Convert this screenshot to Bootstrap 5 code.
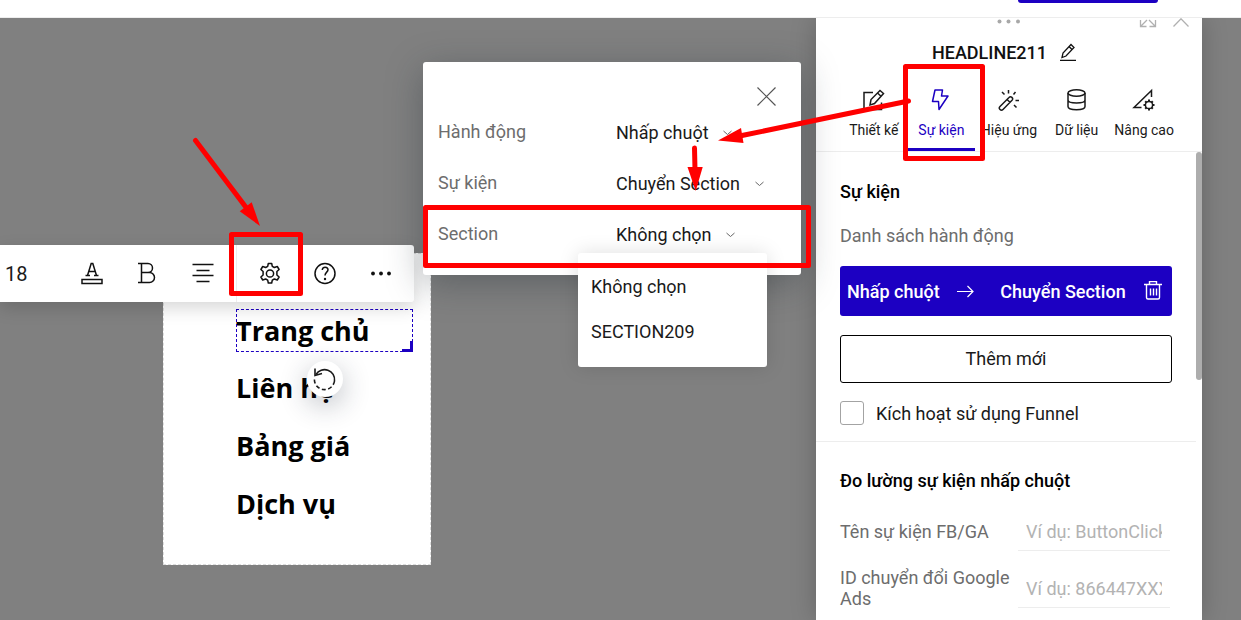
<!DOCTYPE html>
<html lang="vi">
<head>
<meta charset="utf-8">
<meta name="viewport" content="width=device-width, initial-scale=1">
<title>Trình chỉnh sửa trang</title>
<link rel="stylesheet" href="https://cdn.jsdelivr.net/npm/bootstrap@5.3.0/dist/css/bootstrap.min.css">
<style>
  :root { --brand: #1c00c2; --mute: #6d6d6d; --line: #ededed; }
  body { font-family: Roboto, "Liberation Sans", sans-serif; font-size: 18px; line-height: 21px; color: #1a1a1a; background: #808080; }
  svg { display: block; fill: none; stroke: currentColor; }
  button { font-family: inherit; }
  .tool-reset { background: none; border: 0; padding: 0; color: inherit; }
  .topbar { height: 18px; border-bottom: 1px solid var(--line); padding-right: 83px; }
  .btn-publish { width: 140px; height: 3px; background: var(--brand); border-radius: 0 0 3px 3px; }

  /* page section on the canvas */
  .page-block { left: 163px; top: 235px; width: 268px; height: 312px; padding: 55px 17px 0 72px; border: 1px dashed #ddd; }
  .menu-text { font: 700 27px/43px "Open Sans", sans-serif; color: #000; height: 43px; white-space: nowrap; }
  .menu-text.picked { outline: 1px dashed var(--brand); outline-offset: -1px; }
  .menu-text.picked::after { content: ""; position: absolute; right: 0; bottom: 0; width: 11px; height: 11px; border: solid var(--brand); border-width: 0 3px 3px 0; }
  .menu-stack { gap: 15px; }
  .menu-stack .picked { margin-bottom: -1px; }
  .btn-rotate { left: 307px; top: 343px; width: 36px; height: 36px; box-shadow: 0 8px 28px rgba(30,40,60,.3); }

  .format-bar { left: 0; top: 227px; height: 57px; padding-right: 4px; border-radius: 0 3px 3px 0; box-shadow: 0 6px 18px rgba(0,0,0,.16); color: #111; }
  .format-bar button { width: 56px; height: 57px; }
  .size-input { width: 64px; border: 0; padding: 2px 0 0 5px; font-size: 20px; color: #1a1a1a; background: none; }
  .bar-rule { margin-left: 4px; border-left: 1px solid var(--line); padding-left: 5px; }

  .action-box { left: 423px; top: 44px; width: 378px; height: 213px; padding: 24px 15px 0; border-radius: 3px; box-shadow: 0 8px 36px rgba(30,40,50,.35); z-index: 3; }
  .action-box label, .field label, .mute-text { color: var(--mute); }
  .btn-shut { width: 20px; height: 20px; margin-right: 9px; color: #555; }
  .action-row { height: 51px; }
  .action-row label { width: 178px; }
  .action-row svg { margin: 2px 0 0 14px; }
  .pick { appearance: none; border: 0; background: none; padding: 2px 0 0; color: #1a1a1a; line-height: 24px; }
  .pick-narrow { width: 96px; }
  .option-menu { left: 155px; top: 191px; width: 189px; height: 114px; padding: 11px 13px; border-radius: 3px; box-shadow: 0 0 20px rgba(0,0,0,.13); }
  .option-menu button { height: 45px; text-align: left; }

  .side-panel { width: 386px; margin-right: 39px; box-shadow: 0 0 24px rgba(0,0,0,.22); z-index: 2; }
  .grip { height: 10px; color: #b0b0b0; }
  .grip-dots { left: 50%; top: 1px; margin-left: -12px; }
  .grip-tools { right: 12px; top: 0; gap: 15px; }
  .panel-title { height: 48px; gap: 13px; color: #111; font-weight: 500; padding-right: 10px; margin-bottom: 2px; }
  .tab-strip { padding: 0 24px; border-bottom: 1px solid var(--line); height: 74px; }
  .tab-strip button { flex: 1 1 0; height: 73px; padding-top: 10px; font-size: 14px; line-height: 20px; gap: 8px; border-bottom: 3px solid transparent; white-space: nowrap; }
  .tab-strip button.active { color: var(--brand); border-bottom-color: var(--brand); }
  .group { margin-right: 6px; padding: 28px 24px 0; }
  .group h2 { font-size: 18px; line-height: 22px; font-weight: 500; color: #000; margin: 0; }
  .first-group { height: 290px; padding-top: 29px; border-bottom: 1px solid var(--line); }
  .mute-text { margin: 22px 0 20px; }
  .event-card { height: 50px; background: var(--brand); color: #fff; border-radius: 3px; padding: 0 9px 0 7px; font-weight: 500; }
  .btn-more { height: 48px; margin-top: 19px; padding-bottom: 2px; border: 1px solid #000; border-radius: 3px; }
  .funnel { margin-top: 18px; gap: 12px; }
  .funnel input { appearance: none; width: 24px; height: 24px; border: 1px solid #a3a3a3; border-radius: 3px; margin: 0; }
  .field { margin-top: 17px; }
  h2 + .field { margin-top: 21px; }
  .field label { width: 178px; padding-bottom: 2px; }
  .field input { width: 152px; height: 38px; padding: 0 8px; border: 0; border-bottom: 1px solid var(--line); background: none; }
  .field input::placeholder { color: #b3b3b3; opacity: 1; }
  .field + .field { margin-top: 16px; }
  .thumb { right: 0; top: 134px; width: 6px; height: 228px; border-radius: 3px; background: #adadad; }

  .marks { left: 0; top: 0; width: 1241px; height: 620px; z-index: 9; pointer-events: none; stroke: #f00; stroke-width: 5; stroke-linejoin: round; stroke-linecap: round; }
  .marks polygon { fill: #f00; stroke: none; }
</style>
</head>
<body class="vh-100 d-flex flex-column overflow-hidden position-relative">
<header class="topbar bg-white d-flex justify-content-end flex-shrink-0">
  <button class="tool-reset btn-publish" aria-label="Xuất bản"></button>
</header>

<main class="flex-grow-1 d-flex justify-content-end position-relative overflow-hidden">
  <section class="page-block position-absolute bg-white">
    <div class="menu-stack d-flex flex-column">
      <div class="menu-text picked position-relative">Trang chủ</div>
      <div class="menu-text">Liên hệ</div>
      <div class="menu-text">Bảng giá</div>
      <div class="menu-text">Dịch vụ</div>
    </div>
  </section>

  <button class="tool-reset btn-rotate position-absolute rounded-circle bg-white d-flex align-items-center justify-content-center" aria-label="Xoay">
    <svg width="24" height="24" stroke-width="1.6"><path d="M3 7.5A10 10 0 0 1 21.5 14"/><path d="M21.500 14A10 10 0 0 1 1.500 11" stroke-dasharray="4 2.500"/><path d="M2 1.500V8.500L9 6.500"/></svg>
  </button>

  <div class="format-bar position-absolute bg-white d-flex align-items-center" role="toolbar">
    <input class="size-input" type="text" value="18" aria-label="Cỡ chữ">
    <button class="tool-reset d-flex align-items-center justify-content-center" aria-label="Màu chữ"><svg width="24" height="24" stroke-width="1.5"><path d="M5.500 13.500H10M14 13.500h4.500M7.500 13.500 11.200 1.500h1.600L16.500 13.500M8.500 9.500H15.500"/><rect x="2" y="17.500" width="20" height="4"/></svg></button>
    <button class="tool-reset d-flex align-items-center justify-content-center" aria-label="Đậm"><svg width="24" height="24" stroke-width="1.500"><path d="M2 1.500H12a4.500 4.500 0 0 1 0 9H5.500M12 10.500H13.500a5 5 0 0 1 0 10H2M5.500 1.500V20.500"/></svg></button>
    <button class="tool-reset d-flex align-items-center justify-content-center" aria-label="Căn giữa"><svg width="24" height="24" stroke-width="1.500"><path d="M.5 2.500H21.500M4.500 8.500H17.500M.5 13.500H21.500M4.500 19.500H17.500"/></svg></button>
    <div class="bar-rule d-flex">
      <button class="tool-reset d-flex align-items-center justify-content-center" aria-label="Cài đặt"><svg width="24" height="24" stroke-width="1.500" stroke-linejoin="round"><circle cx="12" cy="11.500" r="3.600"/><path d="M10.300 1.500h3.400l.6 2.900 2 1.100 3-1 1.800 3-2.200 2v3.500l2.200 2-1.800 3-3-1-2 1.100-.6 2.900h-3.400l-.6-2.900-2-1.100-3 1-1.800-3 2.200-2V9.500l-2.200-2 1.800-3 3 1 2-1.100z"/></svg></button>
      <button class="tool-reset d-flex align-items-center justify-content-center" aria-label="Trợ giúp"><svg width="24" height="24" stroke-width="1.500"><circle cx="11" cy="11.500" r="10"/><path d="M8.300 8C8.300 4 14 4.500 14 7.800c0 2.300-3 2.500-3 5.700"/><circle cx="11" cy="17" r="1.200" fill="currentColor" stroke="none"/></svg></button>
      <button class="tool-reset d-flex align-items-center justify-content-center" aria-label="Thêm"><svg width="24" height="24"><g fill="#111" stroke="none"><circle cx="3" cy="11.500" r="1.900"/><circle cx="11" cy="11.500" r="1.900"/><circle cx="19" cy="11.500" r="1.900"/></g></svg></button>
    </div>
  </div>

  <section class="action-box position-absolute bg-white">
    <div class="d-flex justify-content-end"><button class="tool-reset btn-shut" aria-label="Đóng"><svg width="20" height="20" stroke-width="1.200"><path d="M.5 1.500 18.500 19.500M18.500 1.500 .5 19.500"/></svg></button></div>
    <div class="action-row d-flex align-items-center">
      <label for="act">Hành động</label>
      <select id="act" class="pick"><option>Nhấp chuột</option></select>
      <svg width="9" height="6"><path d="M.5 1 4.500 4.500 8.500 1" stroke="#666"/></svg>
    </div>
    <div class="action-row d-flex align-items-center">
      <label for="evt">Sự kiện</label>
      <select id="evt" class="pick"><option>Chuyển Section</option></select>
      <svg width="9" height="6"><path d="M.5 1 4.500 4.500 8.500 1" stroke="#666"/></svg>
    </div>
    <div class="action-row d-flex align-items-center">
      <label for="sec">Section</label>
      <select id="sec" class="pick pick-narrow"><option>Không chọn</option><option>SECTION209</option></select>
      <svg width="9" height="6"><path d="M.5 1 4.500 4.500 8.500 1" stroke="#666"/></svg>
    </div>
    <div class="option-menu position-absolute bg-white d-flex flex-column">
      <button class="tool-reset">Không chọn</button>
      <button class="tool-reset">SECTION209</button>
    </div>
  </section>

  <aside class="side-panel bg-white position-relative flex-shrink-0">
    <div class="grip position-relative">
      <svg class="grip-dots position-absolute" width="24" height="5"><g fill="#a8a8a8" stroke="none"><circle cx="2.500" cy="2.500" r="2"/><circle cx="11.500" cy="2.500" r="2"/><circle cx="21" cy="2.500" r="2"/></g></svg>
      <div class="grip-tools position-absolute d-flex">
        <svg width="18" height="10" stroke-width="1.300"><path d="M1.500 2V8.500H7.500M1.500 8.500 8 2M16.500 2V8.500H10.500M16.500 8.500 10 2"/></svg>
        <svg width="18" height="10" stroke-width="1.300"><path d="M1.500 8.500 9 .8 16.500 8.500"/></svg>
      </div>
    </div>
    <div class="panel-title d-flex align-items-center justify-content-center">
      <span>HEADLINE211</span>
      <svg width="16" height="18" stroke-width="1.300"><path d="M0 17.300H16M2 14.500 3 10 11 1.500 14 4.500 6 13ZM9 3.500 12 6.500"/></svg>
    </div>
    <nav class="tab-strip d-flex">
      <button class="tool-reset d-flex flex-column align-items-center"><svg width="24" height="24" stroke-width="1.500"><path d="M11 4.500H2V21.500H19.500V14.500"/><path d="M8 17 9 11.500 18 2.500 21.500 5.500 12.500 15.500ZM15.500 5 19 8.200"/></svg><span>Thiết kế</span></button>
      <button class="tool-reset active d-flex flex-column align-items-center"><svg width="24" height="24" stroke-width="1.500" stroke-linejoin="round"><path d="M6 2H13.500L12.500 8H19L10 21.500 9.500 13.500H3.500Z"/></svg><span>Sự kiện</span></button>
      <button class="tool-reset d-flex flex-column align-items-center"><svg width="24" height="24" stroke-width="1.500"><path d="M3 18.500 12 9.500a1.900 1.900 0 0 1 3 2.800L6 21.500a2 2 0 0 1-3-3ZM10 11.500 13 14.300M11.500 2V5.500M5 4 7.500 6.500M18.500 4 16.500 6.500M18.500 12.500H22M17 17 19.500 19.500"/></svg><span>Hiệu ứng</span></button>
      <button class="tool-reset d-flex flex-column align-items-center"><svg width="24" height="24" stroke-width="1.500"><ellipse cx="11.500" cy="5" rx="8.500" ry="3.200"/><path d="M3 5V18.500C3 22.700 20 22.700 20 18.500V5M3 12C3 16 20 16 20 12"/></svg><span>Dữ liệu</span></button>
      <button class="tool-reset d-flex flex-column align-items-center"><svg width="24" height="24" stroke-width="1.500"><path d="M9.500 19.500H2L19.500 2.500V9"/><circle cx="17" cy="17" r="3.600"/><path d="M17 11.500V13.500M17 20.500V22.500M11.500 17H13.500M20.500 17H22.500M13.200 13.200 14.500 14.500M19.500 19.500 20.800 20.800M20.800 13.200 19.500 14.500M14.500 19.500 13.200 20.800" stroke-width="2"/></svg><span>Nâng cao</span></button>
    </nav>
    <div class="group first-group">
      <h2>Sự kiện</h2>
      <p class="mute-text">Danh sách hành động</p>
      <div class="event-card d-flex align-items-center justify-content-between">
        <span>Nhấp chuột</span>
        <svg width="18" height="14" stroke-width="1.200"><path d="M0 7.500H16M10.500 2 16 7.500 10.500 13"/></svg>
        <span class="ms-2">Chuyển Section</span>
        <button class="tool-reset" aria-label="Xóa"><svg width="20" height="20" stroke-width="1.400"><path d="M1 3.500H19M6.500 3.500V.5H13.500V3.500M3.500 3.500V16.500Q3.500 18 5 18H15Q16.500 18 16.500 16.500V3.500M7.500 7.500V14.500M10.500 7.500V14.500M13.500 7.500V14.500"/></svg></button>
      </div>
      <button class="tool-reset btn-more w-100">Thêm mới</button>
      <div class="funnel d-flex align-items-center">
        <input type="checkbox" id="funnel"><label for="funnel">Kích hoạt sử dụng Funnel</label>
      </div>
    </div>
    <div class="group">
      <h2>Đo lường sự kiện nhấp chuột</h2>
      <div class="field d-flex align-items-center"><label for="fb">Tên sự kiện FB/GA</label><input id="fb" type="text" placeholder="Ví dụ: ButtonClick"></div>
      <div class="field d-flex align-items-center"><label for="ga">ID chuyển đổi Google Ads</label><input id="ga" type="text" placeholder="Ví dụ: 866447XXX"></div>
    </div>
    <div class="thumb position-absolute"></div>
  </aside>
</main>

<svg class="marks position-absolute" aria-hidden="true">
  <rect x="231.500" y="234.500" width="69" height="59"/>
  <rect x="425.500" y="207.500" width="383" height="58"/>
  <rect x="905.500" y="66.500" width="77" height="92"/>
  <path d="M195.500 140.500 248 210M908.500 101 742 135.500M694.500 148 695 170"/>
  <polygon points="260,226 251.700,202.300 239.700,211.300"/>
  <polygon points="718,140.500 741,128 743.500,143"/>
  <polygon points="695.700,191 687.500,167 702.700,167"/>
</svg>
<script src="https://cdn.jsdelivr.net/npm/bootstrap@5.3.0/dist/js/bootstrap.bundle.min.js"></script>
</body>
</html>
